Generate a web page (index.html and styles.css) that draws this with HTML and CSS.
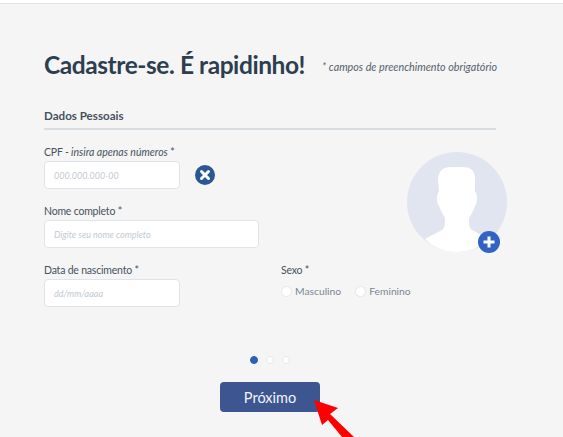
FILE: index.html
```html
<!DOCTYPE html>
<html lang="pt-BR">
<head>
    <meta charset="UTF-8">
    <meta name="viewport" content="width=device-width, initial-scale=1.0">
    <title>Cadastre-se</title>
    <link rel="stylesheet" href="styles.css">
</head>
<body>
    <div class="topbar"></div>
    <div class="container">
        <div class="header">
            <h1>Cadastre-se. É rapidinho!</h1>
            <span class="note">* campos de preenchimento obrigatório</span>
        </div>

        <h2 class="section-title">Dados Pessoais</h2>

        <div class="upper">
            <div class="fields">
                <div class="field">
                    <label>CPF - <em>insira apenas números</em> *</label>
                    <div class="input-row">
                        <input class="input short" type="text" placeholder="000.000.000-00">
                        <svg class="clear-icon" viewBox="0 0 20 20" width="20" height="20">
                            <circle cx="10" cy="10" r="10" fill="#2b5797"/>
                            <path d="M6.5 6.5L13.5 13.5M13.5 6.5L6.5 13.5" stroke="#fff" stroke-width="3" stroke-linecap="round"/>
                        </svg>
                    </div>
                </div>
                <div class="field">
                    <label>Nome completo *</label>
                    <input class="input long" type="text" placeholder="Digite seu nome completo">
                </div>
            </div>
            <div class="avatar">
                <svg viewBox="0 0 100 100" width="100" height="100">
                    <circle cx="50" cy="50" r="50" fill="#e1e5ef"/>
                    <path d="M18 87L35 78Q38 76 38 70L38 66Q34 60 32 54Q30 52 30 46Q30 41 32 40L31 27Q32 15 44 15L56 15Q68 15 68 27L68 40Q70 41 70 46Q70 52 68 54Q66 60 62 66L62 70Q62 76 65 78L82 87Q68 100 50 100Q31 100 18 87Z" fill="#fff"/>
                </svg>
                <svg class="add-icon" viewBox="0 0 22 22" width="22" height="22">
                    <circle cx="11" cy="11" r="11" fill="#3162c4"/>
                    <path d="M11 5.5V16.5M5.5 11H16.5" stroke="#fff" stroke-width="3"/>
                </svg>
            </div>
        </div>

        <div class="lower">
            <div class="field date-field">
                <label>Data de nascimento *</label>
                <input class="input short" type="text" placeholder="dd/mm/aaaa">
            </div>
            <div class="field">
                <label>Sexo *</label>
                <div class="radios">
                    <label class="radio"><span class="radio-dot"></span>Masculino</label>
                    <label class="radio"><span class="radio-dot"></span>Feminino</label>
                </div>
            </div>
        </div>

        <div class="steps">
            <span class="step active"></span>
            <span class="step"></span>
            <span class="step"></span>
        </div>

        <div class="actions">
            <button class="button" type="button">Próximo</button>
        </div>
    </div>

    <svg class="arrow" viewBox="0 0 50 37" width="50" height="37">
        <path d="M0 0L24 8L16 14L40 37L28 37L14 20L8 25Z" fill="#fe0000"/>
    </svg>
</body>
</html>
```

FILE: styles.css
```css
html, body {
    height: 100%;
}
body {
    margin: 0;
    overflow: hidden;
    position: relative;
    background-color: #f5f5f5;
    font-family: Lato, "Open Sans", sans-serif;
    color: #47525e;
}
.topbar {
    height: 3px;
    background: #fff;
    border-bottom: 1px solid #e2e2e2;
}
.container {
    width: 452px;
    padding: 0 0 0 44px;
}
.header {
    display: flex;
    align-items: center;
    padding-top: 45px;
}
h1 {
    margin: 0;
    font-size: 24.5px;
    line-height: 32px;
    letter-spacing: -0.43px;
    font-weight: 700;
    color: #2d3e50;
    white-space: nowrap;
}
.note {
    margin: 2px 0 0 17px;
    font-size: 10.75px;
    font-style: italic;
    color: #55606c;
    white-space: nowrap;
}
.section-title {
    margin: 26px 0 0;
    padding-bottom: 4px;
    font-size: 11.6px;
    line-height: 17px;
    font-weight: 700;
    color: #47525e;
    border-bottom: 2px solid #d8dde2;
}
.upper {
    display: flex;
    justify-content: space-between;
    width: 463px;
    margin-top: 15px;
}
.field {
    margin-bottom: 15px;
}
.field label {
    display: block;
    font-size: 10.5px;
    line-height: 14px;
    letter-spacing: -0.2px;
    margin-bottom: 2px;
}
.field em {
    font-style: italic;
    letter-spacing: 0;
}
.input-row {
    display: flex;
    align-items: center;
    gap: 15px;
}
.input {
    display: block;
    box-sizing: border-box;
    height: 28px;
    padding: 0 9px;
    background: #fff;
    border: 1px solid #e0e4e8;
    border-radius: 4px;
    font-family: inherit;
    font-size: 9px;
    font-style: italic;
}
.input::placeholder {
    color: #c3cad2;
    opacity: 1;
}
.input.short {
    width: 136px;
}
.input.long {
    width: 215px;
}
.avatar {
    position: relative;
    width: 100px;
    height: 100px;
    margin-top: 7px;
}
.avatar svg {
    display: block;
}
.avatar .add-icon {
    position: absolute;
    right: 7px;
    bottom: -1px;
}
.lower {
    display: flex;
}
.date-field {
    width: 237px;
}
.radios {
    display: flex;
    gap: 14px;
    margin-top: 7px;
}
.field .radio {
    display: flex;
    align-items: center;
    gap: 3px;
    margin: 0;
    font-size: 10.3px;
    letter-spacing: 0;
    color: #7b8794;
}
.radio-dot {
    box-sizing: border-box;
    width: 11px;
    height: 11px;
    border-radius: 50%;
    background: #fff;
    border: 1px solid #e4e7ea;
}
.steps {
    display: flex;
    justify-content: center;
    gap: 8px;
    margin-top: 34px;
}
.step {
    box-sizing: border-box;
    width: 8px;
    height: 8px;
    border-radius: 50%;
    background: #fff;
    border: 1px solid #e4e7ea;
}
.step.active {
    background: #2b62b5;
    border-color: #2b62b5;
}
.actions {
    display: flex;
    justify-content: center;
    margin-top: 18px;
}
.button {
    width: 100px;
    height: 30px;
    background: #3d5591;
    color: #f2f4f8;
    border: none;
    border-radius: 4px;
    font-family: inherit;
    font-size: 14.5px;
    cursor: pointer;
}
.arrow {
    position: absolute;
    left: 314px;
    top: 400px;
}
```
